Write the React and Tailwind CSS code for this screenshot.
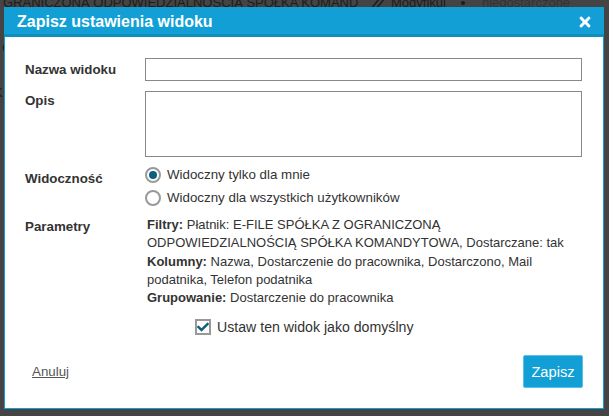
import React from 'react';
import { FaTimes, FaCheck } from 'react-icons/fa';

const Row = ({ label, labelClassName = '', className = '', children }) => (
  <div className={`flex ${className}`}>
    <div className={`w-[120px] shrink-0 font-bold text-[#333] ${labelClassName}`}>{label}</div>
    <div className="flex-1">{children}</div>
  </div>
);

const App = () => {
  return (
    <div className="relative w-[609px] h-[416px] overflow-hidden bg-[#444] font-['Liberation_Sans',Arial,sans-serif] text-[13.33px] text-[#333]">
      {/* Page behind the overlay */}
      <div className="absolute left-0 top-[-5px] flex items-center whitespace-nowrap text-[13px] leading-[16px] text-[#1c1c1c]">
        <span className="ml-[3px] w-[355px] overflow-hidden">GRANICZONĄ ODPOWIEDZIALNOŚCIĄ SPÓŁKA KOMAND)</span>
        <svg className="ml-[12px] h-[14px] w-[16px]" viewBox="0 0 16 14" fill="none" stroke="#1c1c1c" strokeWidth="1.5">
          <path d="M1 13 L9 3 M6 13 L15 2" />
        </svg>
        <span className="ml-[5px]">Modyfikuj</span>
        <span className="ml-[15px] h-[4px] w-[4px] rounded-full bg-[#1c1c1c]" />
        <span className="ml-[17px] text-[#333]">niedostarczone</span>
      </div>
      <span className="absolute left-[2px] top-[40px] text-[13px] leading-[16px] text-[#1c1c1c]">C</span>
      <span className="absolute left-[-6px] top-[85px] text-[13px] leading-[16px] text-[#1c1c1c]">K</span>

      {/* Modal */}
      <div className="absolute left-[4px] top-[7px] flex h-[402px] w-[600px] flex-col border-x-[1px] border-b-[1px] border-[#129fd5] bg-white">
        <div className="-mx-[1px] flex h-[30px] shrink-0 items-center justify-between border-b-[3px] border-[#0e8fc0] bg-[#129fd5] pl-[13px] pr-[11px] pt-[3px] text-white">
          <h1 className="text-[16px] font-bold">Zapisz ustawienia widoku</h1>
          <FaTimes className="text-[16px]" />
        </div>

        <div className="flex flex-1 flex-col pl-[20px] pr-[20px] pt-[21px]">
          <Row label="Nazwa widoku" className="leading-[24px]">
            <input className="block h-[23px] w-[437px] border border-[#888] bg-white" />
          </Row>
          <Row label="Opis" className="mt-[9px] leading-[20px]">
            <textarea className="block h-[66px] w-[437px] resize-none border border-[#888] bg-white" />
          </Row>

          <Row label="Widoczność" labelClassName="pt-[4px]" className="mt-[6px] leading-[23px]">
            <div className="flex flex-col leading-[23px]">
              <label className="flex items-center gap-[6px]">
                <span className="flex h-[16px] w-[16px] items-center justify-center rounded-full border-2 border-[#999] bg-white">
                  <span className="h-[8px] w-[8px] rounded-full bg-[#0d5f80]" />
                </span>
                Widoczny tylko dla mnie
              </label>
              <label className="flex items-center gap-[6px]">
                <span className="h-[16px] w-[16px] rounded-full border-2 border-[#999] bg-white" />
                Widoczny dla wszystkich użytkowników
              </label>
            </div>
          </Row>

          <Row label="Parametry" className="mt-[9px] leading-[18.25px]">
            <div className="-mt-[2px] w-[424px] pl-[2px] text-[13px]">
              <p><b>Filtry:</b> Płatnik: E-FILE SPÓŁKA Z OGRANICZONĄ ODPOWIEDZIALNOŚCIĄ SPÓŁKA KOMANDYTOWA, Dostarczane: tak</p>
              <p><b>Kolumny:</b> Nazwa, Dostarczenie do pracownika, Dostarczono, Mail podatnika, Telefon podatnika</p>
              <p><b>Grupowanie:</b> Dostarczenie do pracownika</p>
            </div>
          </Row>

          <label className="mt-[10px] ml-[170px] flex items-center gap-[6px] leading-[20px]">
            <span className="flex h-[16px] w-[16px] items-center justify-center border-2 border-[#999] bg-white text-[#0d5f80]">
              <FaCheck className="text-[12px]" />
            </span>
            <span className="text-[14.15px]">Ustaw ten widok jako domyślny</span>
          </label>

          <div className="mt-[18px] flex items-center justify-between pl-[7px]">
            <a className="underline text-[#555]">Anuluj</a>
            <button className="h-[33px] w-[60px] rounded-[2px] border border-[#5cc0e6] bg-[#129fd5] text-[14.67px] text-white">Zapisz</button>
          </div>
        </div>
      </div>
    </div>
  );
};

export default App;
